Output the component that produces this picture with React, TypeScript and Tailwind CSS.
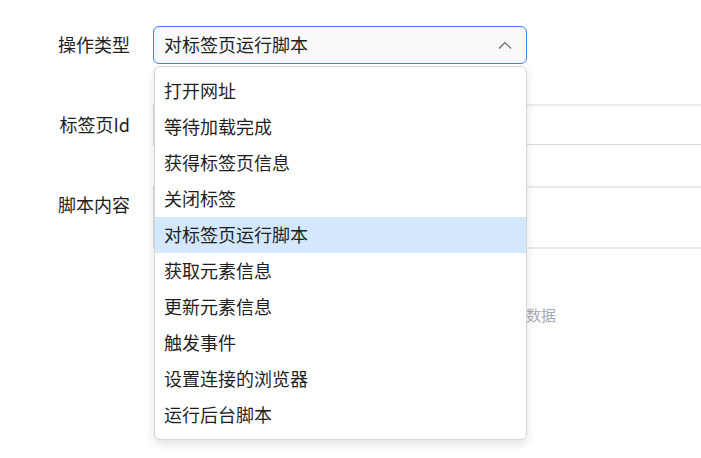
import React from 'react'

const options = [
  '打开网址',
  '等待加载完成',
  '获得标签页信息',
  '关闭标签',
  '对标签页运行脚本',
  '获取元素信息',
  '更新元素信息',
  '触发事件',
  '设置连接的浏览器',
  '运行后台脚本',
]

const selected = '对标签页运行脚本'

export default function App() {
  return (
    <div
      className="relative w-[701px] h-[458px] overflow-hidden bg-white text-[#1f1f1f]"
      style={{ fontFamily: '"Noto Sans CJK SC", "Noto Sans", sans-serif' }}
    >
      <div className="flex flex-col pt-[26px]">
        {/* 操作类型 */}
        <div className="flex items-center h-[38px]">
          <label className="w-[130px] shrink-0 text-right text-[18px] leading-none pb-[2px]">操作类型</label>
          <div className="ml-[23px] w-[374px] shrink-0 h-[38px] flex items-center justify-between pl-[10px] pr-[14px] rounded-[6px] border border-[#3d7ff3] bg-[#f9f9f9] text-[18px]">
            <span className="pb-[2px]">{selected}</span>
            <svg width="14" height="8" viewBox="0 0 14 8" fill="none" className="text-[#666]">
              <path d="M1 7.5 L7 1.5 L13 7.5" stroke="currentColor" strokeWidth="1.2" />
            </svg>
          </div>
        </div>

        {/* 标签页Id */}
        <div className="flex items-center mt-[40px] h-[41px]">
          <label className="w-[130px] shrink-0 text-right text-[18px] leading-none pb-[2px]">标签页Id</label>
          <div className="ml-[23px] w-[600px] h-[41px] shrink-0 border-t-2 border-b border-t-[#ebebeb] border-b-[#dcdcdc] border-l border-l-[#dcdcdc]" />
        </div>

        {/* 脚本内容 */}
        <div className="flex items-start mt-[41px] h-[63px]">
          <label className="w-[130px] shrink-0 text-right text-[18px] leading-none mt-[9px]">脚本内容</label>
          <div className="ml-[23px] w-[600px] h-[63px] shrink-0 border-y-2 border-[#ebebeb] border-l border-l-[#dcdcdc]" />
        </div>

        {/* 空数据 */}
        <div className="pl-[496px] mt-[58px] text-[15px] leading-none text-[#a8abb2]">暂无数据</div>
      </div>

      {/* 下拉菜单 */}
      <div className="absolute left-[154px] top-[66px] w-[373px] h-[374px] rounded-[6px] border border-[#d3d6dc] bg-white shadow-[0_4px_10px_rgba(0,0,0,0.12)] py-[6px]">
        {options.map((o) => (
          <div
            key={o}
            className={`h-[36px] flex items-center pl-[9px] pb-[2px] text-[18px] ${o === selected ? 'bg-[#d3e8fc]' : ''}`}
          >
            {o}
          </div>
        ))}
      </div>
    </div>
  )
}
